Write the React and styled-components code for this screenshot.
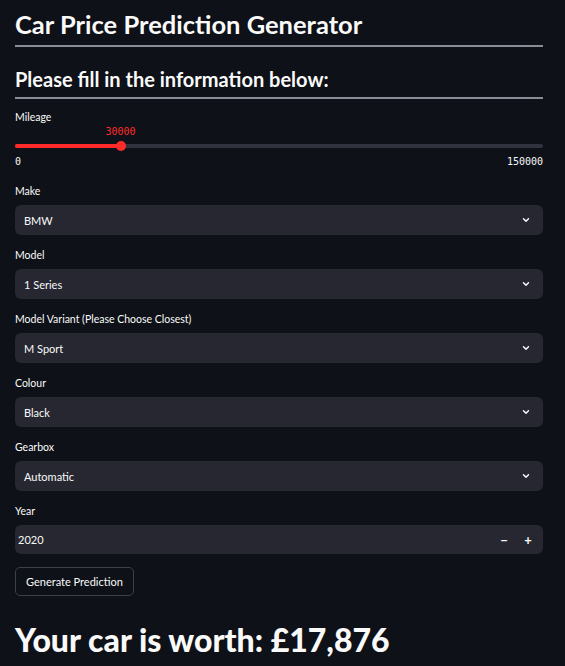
import React from "react";
import styled, { createGlobalStyle } from "styled-components";

const Global = createGlobalStyle`
  html, body {
    margin: 0;
    background: #0e1117;
    color: #fafafa;
    font-family: Lato, "Noto Sans", sans-serif;
  }
`;

const fields = [
  { label: "Make", value: "BMW" },
  { label: "Model", value: "1 Series" },
  { label: "Model Variant (Please Choose Closest)", value: "M Sport" },
  { label: "Colour", value: "Black" },
  { label: "Gearbox", value: "Automatic" },
];

function Chevron() {
  return (
    <svg width="10" height="10" viewBox="0 0 24 24" fill="none" stroke="#fafafa" strokeWidth="3.5" strokeLinecap="round" strokeLinejoin="round">
      <path d="M6 9l6 6 6-6" />
    </svg>
  );
}

export default function App() {
  const mileage = 30000;
  const max = 150000;
  const pct = (mileage / max) * 100;

  return (
    <Page>
      <Global />
      <Title>Car Price Prediction Generator</Title>
      <Rule />
      <SubTitle>Please fill in the information below:</SubTitle>
      <Rule />

      <SliderField>
        <Label>Mileage</Label>
        <Slider>
          <ValueTag style={{ left: `${pct}%` }}>{mileage}</ValueTag>
          <Track>
            <Fill style={{ width: `${pct}%` }} />
            <Thumb style={{ left: `${pct}%` }} />
          </Track>
          <Ticks>
            <span>0</span>
            <span>{max}</span>
          </Ticks>
        </Slider>
      </SliderField>

      {fields.map((f, i) => (
        <Field key={f.label} $first={i === 0}>
          <Label>{f.label}</Label>
          <Select>
            <span>{f.value}</span>
            <Chevron />
          </Select>
        </Field>
      ))}

      <Field>
        <Label>Year</Label>
        <NumberBox>
          <span>2020</span>
          <Steppers>
            <Step>−</Step>
            <Step>+</Step>
          </Steppers>
        </NumberBox>
      </Field>

      <Button>Generate Prediction</Button>

      <Result>Your car is worth: £17,876</Result>
    </Page>
  );
}

const Page = styled.div`
  width: 528px;
  padding: 0 22px 0 15px;
  display: flex;
  flex-direction: column;
`;

const Title = styled.h1`
  margin: 8px 0 0;
  font-size: 25.5px;
  line-height: 32px;
  font-weight: 700;
`;

const Rule = styled.div`
  height: 2px;
  margin-top: 5px;
  background: #8a8c97;
`;

const SubTitle = styled.h2`
  margin: 19px 0 0;
  font-size: 20px;
  line-height: 26px;
  font-weight: 700;
`;

const Label = styled.div`
  font-size: 10.5px;
  line-height: 14px;
  color: #fafafa;
`;

const SliderField = styled.div`
  margin-top: 11px;
`;

const Field = styled.div`
  margin-top: ${(p) => (p.$first ? "15px" : "13px")};
  display: flex;
  flex-direction: column;
  gap: 7px;
`;

const Slider = styled.div`
  position: relative;
  padding-top: 20px;
`;

const ValueTag = styled.span`
  position: absolute;
  top: 1px;
  transform: translateX(-50%);
  font-family: "DejaVu Sans Mono", monospace;
  font-size: 10px;
  line-height: 14px;
  color: #ff2b2b;
`;

const Track = styled.div`
  position: relative;
  height: 4px;
  border-radius: 2px;
  background: #31333f;
`;

const Fill = styled.div`
  height: 100%;
  border-radius: 2px;
  background: #ff2b2b;
`;

const Thumb = styled.div`
  position: absolute;
  top: 50%;
  width: 10px;
  height: 10px;
  border-radius: 50%;
  background: #ff2b2b;
  transform: translate(-50%, -50%);
`;

const Ticks = styled.div`
  display: flex;
  justify-content: space-between;
  margin-top: 7px;
  font-family: "DejaVu Sans Mono", monospace;
  font-size: 10px;
  line-height: 14px;
  color: #fafafa;
`;

const Select = styled.div`
  height: 30px;
  border-radius: 6px;
  background: #262730;
  display: flex;
  align-items: center;
  justify-content: space-between;
  padding: 0 12px 0 9px;
  font-size: 11px;
`;

const NumberBox = styled(Select)`
  height: 29px;
  padding: 0 4px 0 3px;
`;

const Steppers = styled.div`
  display: flex;
  gap: 2px;
`;

const Step = styled.span`
  width: 22px;
  text-align: center;
  font-size: 13px;
  font-weight: 700;
`;

const Button = styled.button`
  align-self: flex-start;
  margin-top: 13px;
  height: 29px;
  padding: 0 10px;
  border: 1px solid #3d3f4a;
  border-radius: 5px;
  background: #0e1117;
  color: #fafafa;
  font-family: inherit;
  font-size: 11px;
`;

const Result = styled.div`
  margin-top: 25px;
  font-size: 32px;
  font-weight: 900;
  line-height: 37px;
`;
